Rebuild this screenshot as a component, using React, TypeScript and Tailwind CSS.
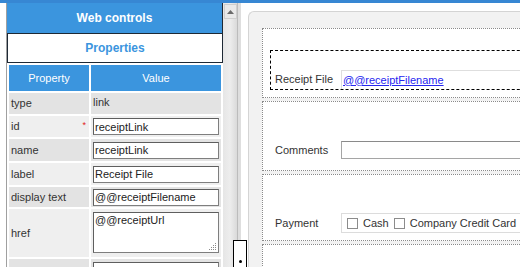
import React from "react";

type Row = { name: string; h: string; tone: "dark" | "light"; value?: string; kind: "text" | "input" | "area"; required?: boolean };

const rows: Row[] = [
  { name: "type", h: "h-[21px]", tone: "dark", value: "link", kind: "text" },
  { name: "id", h: "h-[21px]", tone: "light", value: "receiptLink", kind: "input", required: true },
  { name: "name", h: "h-[22px]", tone: "dark", value: "receiptLink", kind: "input" },
  { name: "label", h: "h-[22px]", tone: "light", value: "Receipt File", kind: "input" },
  { name: "display text", h: "h-[20px]", tone: "dark", value: "@@receiptFilename", kind: "input" },
  { name: "href", h: "h-[48px]", tone: "light", value: "@@receiptUrl", kind: "area" },
  { name: "", h: "h-[22px]", tone: "dark", value: "", kind: "input" },
];

function ResizeGrip() {
  // dotted triangle in the textarea corner
  const dots = [
    [6, 0], [6, 2], [4, 2], [6, 4], [4, 4], [2, 4], [6, 6], [4, 6], [2, 6], [0, 6],
  ];
  return (
    <svg width="8" height="8" className="absolute right-[2px] bottom-[2px]">
      {dots.map(([x, y], i) => (
        <rect key={i} x={x} y={y} width="1" height="1" fill="#8a8a8a" />
      ))}
    </svg>
  );
}

function PropertiesPanel() {
  return (
    <div className="w-[217px] shrink-0 border-l border-[#a0a0a0] flex flex-col overflow-hidden">
      {/* Panel title */}
      <div className="h-[31px] shrink-0 bg-[#3b95de] border-r border-b border-[#1e2935] flex items-center justify-center text-white font-bold text-[12px]">
        Web controls
      </div>
      <div className="h-[29px] shrink-0 bg-white border-r border-b border-l border-[#1e2935] flex items-center justify-center text-[#3b95de] font-bold text-[12px]">
        Properties
      </div>

      {/* Property grid */}
      <div className="mt-[2px] pl-[2px] shrink-0 grid grid-cols-[80px_130px] gap-[2px]">
        <div className="h-[26px] bg-[#3b95de] text-white flex items-center justify-center">Property</div>
        <div className="h-[26px] bg-[#3b95de] text-white flex items-center justify-center">Value</div>
        {rows.map((r, i) => {
          const bg = r.tone === "dark" ? "bg-[#e3e3e3]" : "bg-[#efefef]";
          return (
            <React.Fragment key={i}>
              <div className={`${r.h} ${bg} relative flex items-center pl-[2px]`}>
                {r.name}
                {r.required && <span className="absolute right-[3px] top-[5px] text-[9px] leading-none text-[#e02020]">*</span>}
              </div>
              <div className={`${r.h} ${bg} flex ${r.kind === "area" ? "items-start pt-[3px]" : "items-center"} pl-[2px]`}>
                {r.kind === "text" && <span className="-mt-[2px]">{r.value}</span>}
                {r.kind === "input" && (
                  <input
                    readOnly
                    value={r.value}
                    className="w-[126px] h-[17px] bg-white border border-[#7e7e7e] border-t-[#5e5e5e] border-l-[#5e5e5e] px-[1px] text-[11px] text-[#222] outline-none"
                  />
                )}
                {r.kind === "area" && (
                  <div className="relative">
                    <textarea
                      readOnly
                      value={r.value}
                      className="block w-[126px] h-[41px] resize-none bg-white border border-[#7e7e7e] border-t-[#5e5e5e] border-l-[#5e5e5e] px-[1px] pt-[1px] text-[11px] leading-[13px] text-[#222] outline-none"
                    />
                    <ResizeGrip />
                  </div>
                )}
              </div>
            </React.Fragment>
          );
        })}
      </div>
    </div>
  );
}

function Scrollbar() {
  return (
    <div className="flex h-full shrink-0">
      <div className="w-[14px] h-full bg-gradient-to-r from-[#e6e6e6] via-[#ededed] to-[#dadada] pt-[1px] pl-[1px]">
        <div className="w-[13px] h-[15px] bg-[#e9e9e9] border border-[#cfcfcf] flex items-center justify-center">
          <svg width="7" height="4" viewBox="0 0 7 4">
            <path d="M3.5 0 L7 4 L0 4 Z" fill="#6a6a6a" />
          </svg>
        </div>
      </div>
      <div className="w-[1px] h-full bg-[#bcbcbc]" />
      <div className="w-[3px] h-full bg-[#dedede]" />
    </div>
  );
}

function Checkbox() {
  return <div className="w-[11px] h-[11px] shrink-0 bg-white border border-[#8c8c8c]" />;
}

function Canvas() {
  return (
    <div className="flex-1 min-w-0 mt-[8px] rounded-tl-[6px] border-l border-t border-[#d4d4d4] bg-[#f2f2f2] pl-[13px] pt-[16px] overflow-hidden">
      <div className="flex flex-col gap-[3px] w-[300px]">
        {/* Receipt link row */}
        <div className="h-[70px] shrink-0 bg-white border border-dotted border-[#8a8a8a] flex items-end pl-[7px] pb-[7px]">
          <div className="w-[280px] h-[40px] border border-dashed border-black flex items-end pl-[4px]">
            <div className="flex items-center">
              <span className="w-[66px] shrink-0 text-[#333]">Receipt File</span>
              <div className="w-[200px] h-[19px] border-t border-l border-[#dedede] pl-[1px] flex items-center">
                <span className="text-[#2626f0] underline">@@receiptFilename</span>
              </div>
            </div>
          </div>
        </div>

        {/* Comments row */}
        <div className="h-[70px] shrink-0 bg-white border border-dotted border-[#8a8a8a] flex items-end pl-[12px] pb-[11px]">
          <div className="flex items-center">
            <span className="w-[66px] shrink-0 text-[#333]">Comments</span>
            <div className="w-[200px] h-[18px] bg-white border border-[#a5a5a5] border-t-[#8a8a8a]" />
          </div>
        </div>

        {/* Payment row */}
        <div className="h-[67px] shrink-0 bg-white border border-dotted border-[#8a8a8a] flex items-end pl-[12px] pb-[7px]">
          <div className="flex items-center">
            <span className="w-[66px] shrink-0 text-[#333]">Payment</span>
            <div className="w-[200px] h-[20px] border border-[#dcdcdc] flex items-center pl-[5px] gap-[5px] text-[#333]">
              <Checkbox />
              <span>Cash</span>
              <Checkbox />
              <span className="whitespace-nowrap">Company Credit Card</span>
            </div>
          </div>
        </div>

        <div className="h-[40px] shrink-0 bg-white border border-dotted border-[#8a8a8a]" />
      </div>
    </div>
  );
}

export default function App() {
  return (
    <div className="relative w-[520px] h-[267px] overflow-hidden bg-white font-['Liberation_Sans',Arial,sans-serif] text-[11px] text-[#333]">
      <div className="h-[3px] bg-[#3787d3]" />
      <div className="flex h-[264px]">
        <div className="w-[6px] shrink-0" />
        <PropertiesPanel />
        <Scrollbar />
        <div className="w-[7px] shrink-0" />
        <Canvas />
      </div>

      {/* splitter handle */}
      <div className="absolute left-[233px] top-[240px] w-[14px] h-[30px] bg-white border border-black">
        <div className="absolute left-[5px] top-[19px] w-[3px] h-[3px] rounded-full bg-black" />
      </div>
    </div>
  );
}
